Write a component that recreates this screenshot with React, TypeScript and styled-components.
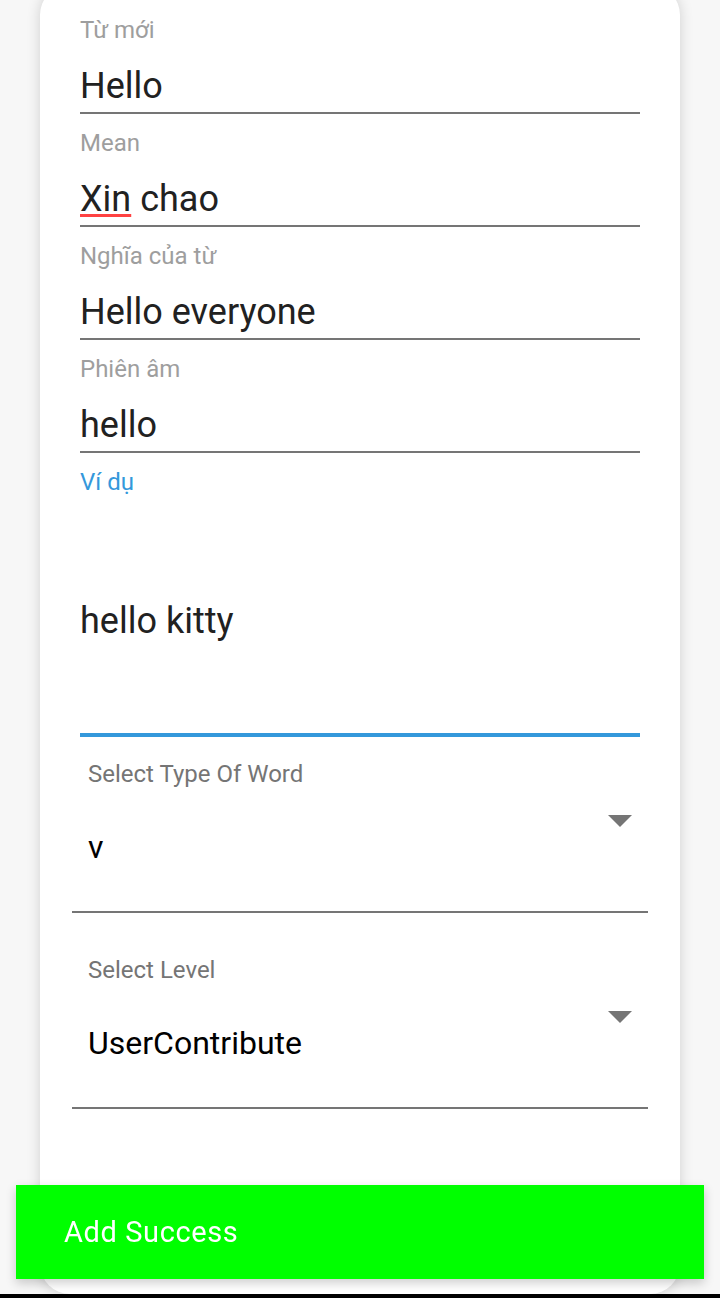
import React from "react";
import styled, { createGlobalStyle } from "styled-components";

const Global = createGlobalStyle`
  html, body { margin: 0; padding: 0; }
  body {
    background: #f7f7f7;
    font-family: Roboto, "Noto Sans", Arial, sans-serif;
    overflow: hidden;
  }
  * { box-sizing: border-box; }
`;

const Page = styled.div`
  height: 1298px;
  display: flex;
  flex-direction: column;
  padding: 0 40px;
`;

const Card = styled.div`
  flex: 1;
  margin-top: -15px;
  background: #ffffff;
  border-radius: 30px;
  box-shadow: 0 0 14px rgba(0, 0, 0, 0.16);
  padding: 16px 40px 0;
  display: flex;
  flex-direction: column;
`;

const BottomBar = styled.div`
  height: 4px;
  margin: 0 -40px;
  background: #000;
  flex-shrink: 0;
`;

const Field = styled.div<{ $focused?: boolean }>`
  display: flex;
  flex-direction: column;
  border-bottom: ${(p) => (p.$focused ? "4px solid #3498db" : "2px solid #757575")};
`;

const Label = styled.div<{ $focused?: boolean }>`
  font-size: 24px;
  line-height: 28px;
  padding-top: 15px;
  color: ${(p) => (p.$focused ? "#3498db" : "#9e9e9e")};
`;

const Value = styled.div<{ $multiline?: boolean }>`
  font-size: 36px;
  line-height: 51px;
  color: #212121;
  margin-top: 17px;
  padding: ${(p) => (p.$multiline ? "83px 0 86px" : "0")};
`;

const Misspelled = styled.span`
  text-decoration-line: underline;
  text-decoration-color: #ff4242;
  text-decoration-thickness: 3px;
  text-underline-offset: 3px;
`;

const Select = styled.div<{ $gap?: boolean }>`
  margin: ${(p) => (p.$gap ? "20px" : "0")} -8px 0;
  padding: 23px 16px 44px;
  border-bottom: 2px solid #757575;
  display: flex;
  flex-direction: column;
`;

const SelectLabel = styled.div`
  font-size: 24px;
  line-height: 28px;
  color: #757575;
`;

const SelectRow = styled.div`
  display: flex;
  align-items: flex-start;
  justify-content: space-between;
  margin-top: 39px;
`;

const SelectValue = styled.div`
  font-size: 32px;
  line-height: 40px;
  color: #000;
`;

const Arrow = styled.div`
  width: 0;
  height: 0;
  margin-top: -12px;
  border-left: 12px solid transparent;
  border-right: 12px solid transparent;
  border-top: 12px solid #757575;
`;

const Toast = styled.div`
  position: fixed;
  left: 16px;
  right: 16px;
  bottom: 19px;
  height: 94px;
  background: #00ff00;
  display: flex;
  align-items: center;
  padding-left: 48px;
  color: #ffffff;
  font-size: 29px;
  letter-spacing: 0.6px;
  box-shadow: 0 4px 10px rgba(0, 0, 0, 0.2);
`;

const fields = [
  { label: "Từ mới", value: "Hello" },
  { label: "Mean", value: "Xin chao", misspelled: true },
  { label: "Nghĩa của từ", value: "Hello everyone" },
  { label: "Phiên âm", value: "hello" },
];

const selects = [
  { label: "Select Type Of Word", value: "v" },
  { label: "Select Level", value: "UserContribute" },
];

export default function App() {
  return (
    <>
      <Global />
      <Page>
        <Card>
          {fields.map((f) => (
            <Field key={f.label}>
              <Label>{f.label}</Label>
              <Value>
                {f.misspelled ? (
                  <>
                    <Misspelled>Xin</Misspelled> chao
                  </>
                ) : (
                  f.value
                )}
              </Value>
            </Field>
          ))}
          <Field $focused>
            <Label $focused>Ví dụ</Label>
            <Value $multiline>hello kitty</Value>
          </Field>
          {selects.map((s, i) => (
            <Select key={s.label} $gap={i > 0}>
              <SelectLabel>{s.label}</SelectLabel>
              <SelectRow>
                <SelectValue>{s.value}</SelectValue>
                <Arrow />
              </SelectRow>
            </Select>
          ))}
        </Card>
        <BottomBar />
      </Page>
      <Toast>Add Success</Toast>
    </>
  );
}
